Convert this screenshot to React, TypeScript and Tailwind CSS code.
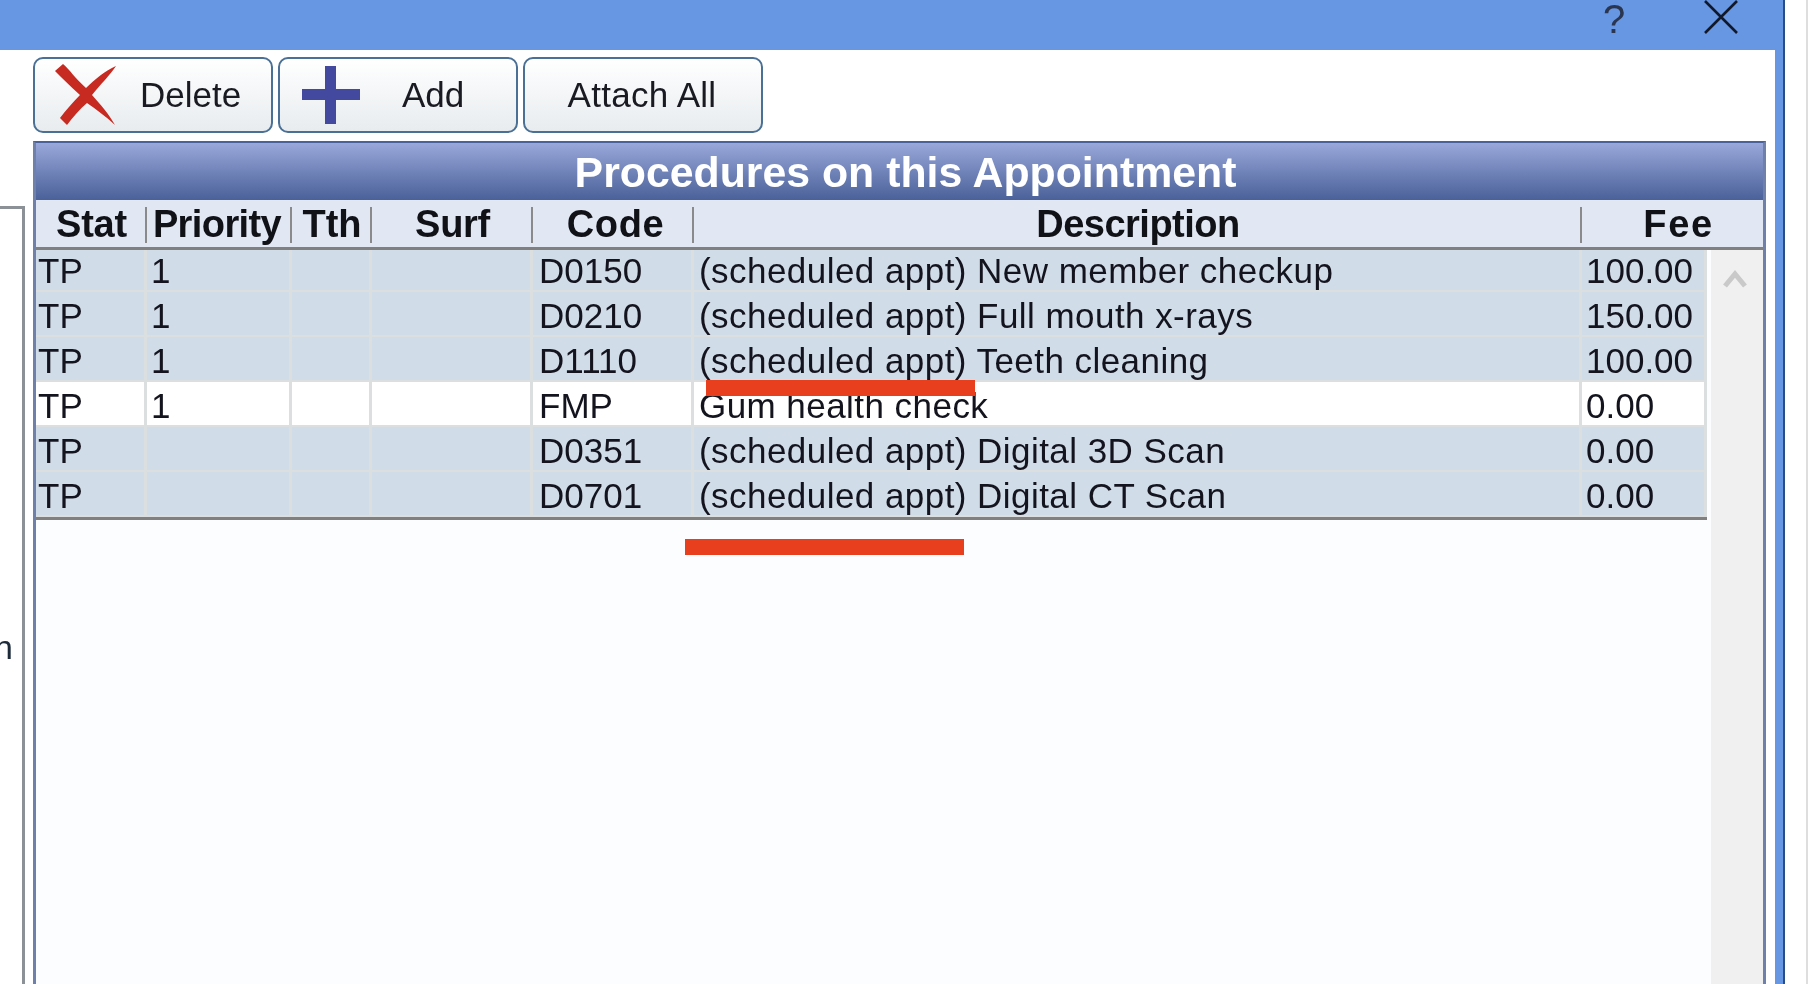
import React from 'react';

const rows = [
  { stat: 'TP', priority: '1', code: 'D0150', description: '(scheduled appt) New member checkup', fee: '100.00' },
  { stat: 'TP', priority: '1', code: 'D0210', description: '(scheduled appt) Full mouth x-rays', fee: '150.00' },
  { stat: 'TP', priority: '1', code: 'D1110', description: '(scheduled appt) Teeth cleaning', fee: '100.00' },
  { stat: 'TP', priority: '1', code: 'FMP', description: 'Gum health check', fee: '0.00', isPlain: true },
  { stat: 'TP', priority: '', code: 'D0351', description: '(scheduled appt) Digital 3D Scan', fee: '0.00' },
  { stat: 'TP', priority: '', code: 'D0701', description: '(scheduled appt) Digital CT Scan', fee: '0.00' },
];

const headers = [
  { label: 'Stat', className: 'tracking-[-0.2px]' },
  { label: 'Priority', className: 'tracking-[-0.6px] pr-[5px]' },
  { label: 'Tth', className: 'tracking-[0px]' },
  { label: 'Surf', className: 'tracking-[-0.3px]' },
  { label: 'Code', className: 'tracking-[0.6px] pl-[4px]' },
  { label: 'Description', className: 'tracking-[-0.5px]' },
  { label: 'Fee', className: 'tracking-[1.6px] pl-[12px]' },
];

const ToolButton = ({ children }: { children: React.ReactNode }) => (
  <button className="flex h-[76px] w-[240px] items-center rounded-[10px] border-2 border-[#4a7096] bg-gradient-to-b from-[#ffffff] to-[#e8ecef] text-[35px] text-[#1a1a22]">
    {children}
  </button>
);

const Row = ({ row }: { row: typeof rows[number] }) => {
  const cell = 'flex items-center overflow-hidden whitespace-nowrap border-r-[3px] border-b-[2px] border-[#dcdfdf] pt-[3px] pl-[2px]';
  return (
    <div className={`grid h-[45px] grid-cols-[111px_145px_80px_161px_161px_888px_125px] text-[35px] leading-none text-[#14141e] ${row.isPlain ? 'bg-white' : 'bg-[#d0dce8]'}`}>
      <div className={cell}>{row.stat}</div>
      <div className={`${cell} pl-[4px]`}>{row.priority}</div>
      <div className={cell} />
      <div className={cell} />
      <div className={`${cell} pl-[6px]`}>{row.code}</div>
      <div className={`${cell} pl-[5px] tracking-[0.45px]`}>{row.description}</div>
      <div className={`${cell} border-r-0 pl-[4px]`}>{row.fee}</div>
    </div>
  );
};

export default function App() {
  return (
    <div className="relative flex h-[984px] w-[1810px] overflow-hidden bg-white font-['Liberation_Sans',Arial,sans-serif] blur-[0.7px]">
      <div className="flex w-[1785px] shrink-0 flex-col border-r-[2px] border-[#2b4d85]">
        <div className="relative flex h-[50px] shrink-0 items-center justify-end bg-[#6797e3] pr-[45px]">
          <span className="absolute left-[1603px] top-[-1px] text-[40px] leading-none text-[#2a3550]">?</span>
          <svg width="34" height="34" viewBox="0 0 34 34" className="mb-[17px]">
            <path d="M1 1 L33 33 M33 1 L1 33" stroke="#10182a" strokeWidth="2.6" fill="none" />
          </svg>
        </div>
        <div className="flex min-h-0 flex-1 border-r-[8px] border-[#6797e3] bg-white">
          <div className="w-[33px] shrink-0 pt-[156px]">
            <div className="flex h-full w-[25px] justify-end overflow-hidden border-t-[3px] border-r-[3px] border-[#8b9196] bg-white pr-[9px] pt-[421px] text-[34px] leading-none text-[#1d2a3a]">
              <span className="shrink-0">h</span>
            </div>
          </div>
          <div className="flex min-w-0 flex-1 flex-col pt-[7px] pr-[9px]">
            <div className="flex h-[76px] shrink-0 gap-[5px]">
              <ToolButton>
                <svg width="62" height="62" viewBox="0 0 62 62" className="ml-[20px] shrink-0">
                  <path d="M0 7 L8 0 C15 6 19 13 31 24 C40 15 50 7 61 2 C55 11 45 21 37 31 C45 40 54 50 60 61 C50 52 41 45 32 39 C25 45 18 53 12 61 L5 54 C11 46 18 38 25 31 C15 22 7 14 0 7 Z" fill="#c62a20" />
                </svg>
                <span className="ml-[23px]">Delete</span>
              </ToolButton>
              <ToolButton>
                <svg width="58" height="58" viewBox="0 0 58 58" className="ml-[22px] shrink-0">
                  <path d="M23 0 H34 V23 H58 V34 H34 V58 H23 V34 H0 V23 H23 Z" fill="#4449a0" />
                </svg>
                <span className="ml-[42px]">Add</span>
              </ToolButton>
              <ToolButton>
                <span className="w-full pr-[2px] text-center tracking-[0.3px]">Attach All</span>
              </ToolButton>
            </div>
            <div className="mt-[8px] flex min-h-0 flex-1 flex-col border-x-[3px] border-t-[2px] border-x-[#6f80ab] border-t-[#4a6199] bg-[#fcfdff]">
              <div className="flex h-[57px] shrink-0 items-center justify-center bg-gradient-to-b from-[#9aa8da] to-[#4a6199] pl-[12px] pt-[2px] text-[42.8px] font-bold text-white">
                Procedures on this Appointment
              </div>
              <div className="relative z-10 grid h-[47px] shrink-0 grid-cols-[111px_145px_80px_161px_161px_888px_1fr] items-center bg-[#e1e8f3] text-[38px] font-bold leading-none text-[#111118] shadow-[0_3px_0_#808080]">
                {headers.map((header, index) => (
                  <div key={header.label} className="relative h-full">
                    <div className={`flex h-full items-center justify-center whitespace-nowrap ${header.className}`}>
                      {header.label}
                    </div>
                    {index < 6 && <div className="absolute right-0 top-[7px] h-[36px] w-[2px] bg-[#8a8a8a]" />}
                  </div>
                ))}
              </div>
              <div className="flex min-h-0 flex-1">
                <div className="w-[1671px] shrink-0">
                  {rows.map(row => <Row key={row.code} row={row} />)}
                  <div className="h-[3px] bg-[#808080]" />
                </div>
                <div className="ml-[4px] flex flex-1 justify-center bg-[#f0f0f0] pr-[4px] pt-[22px]">
                  <svg width="26" height="20" viewBox="0 0 26 20" fill="none" className="shrink-0">
                    <path d="M3 17 L13 5 L23 17" stroke="#c9c9c9" strokeWidth="5" />
                  </svg>
                </div>
              </div>
            </div>
          </div>
        </div>
      </div>
      <div className="ml-[21px] h-full w-[2px] bg-[#dedede]" />
      <div className="absolute left-[706px] top-[380px] h-[16px] w-[269px] bg-[#e8401f]" />
      <div className="absolute left-[685px] top-[539px] h-[16px] w-[279px] bg-[#e8401f]" />
    </div>
  );
}
